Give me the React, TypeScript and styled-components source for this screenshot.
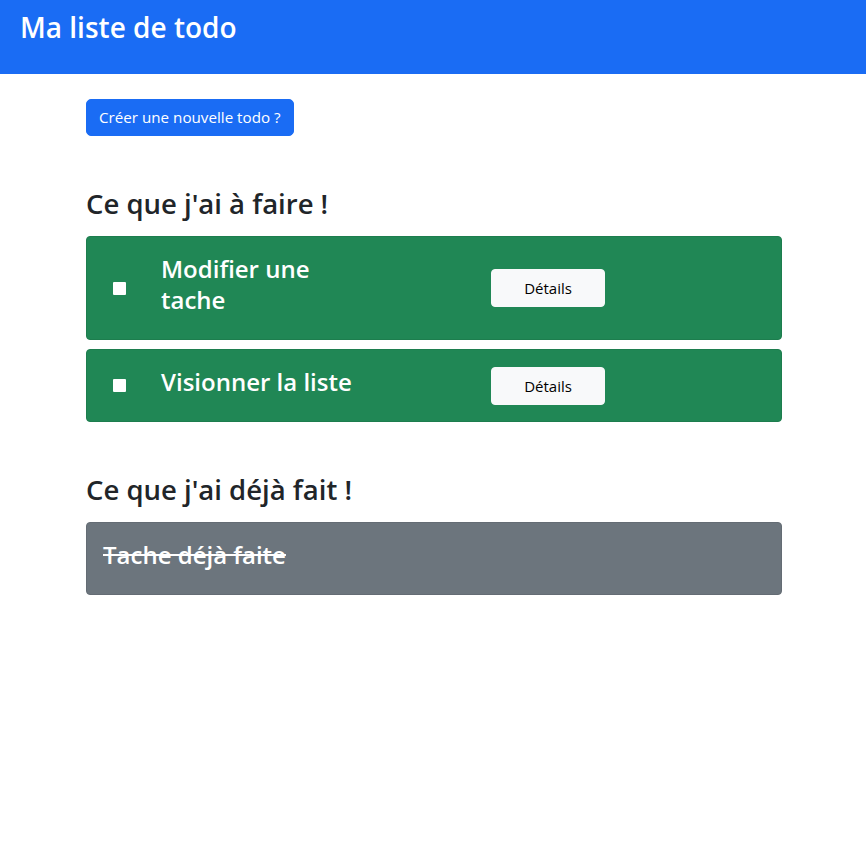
import React from "react";
import styled, { createGlobalStyle } from "styled-components";

const Global = createGlobalStyle`
  * { box-sizing: border-box; }
  body {
    margin: 0;
    font-family: "Open Sans", "Noto Sans", "Liberation Sans", sans-serif;
    color: #212529;
    background: #fff;
  }
`;

const Header = styled.header`
  background: #1a6cf4;
  height: 74px;
  padding: 8px 20px;
`;

const Brand = styled.h1`
  margin: 0;
  color: #fff;
  font-size: 28px;
  font-weight: 600;
  line-height: 38px;
`;

const Container = styled.main`
  max-width: 720px;
  margin: 0 auto;
  padding: 25px 11px 0 13px;
`;

const PrimaryButton = styled.button`
  font: inherit;
  font-size: 15.2px;
  line-height: 23px;
  padding: 6px 12px;
  color: #fff;
  background: #1a6cf4;
  border: 1px solid #1a6cf4;
  border-radius: 5px;
  cursor: pointer;
`;

const SectionTitle = styled.h2`
  margin: 50px 0 15px;
  font-size: 27.5px;
  font-weight: 600;
  line-height: 35px;
  color: #212529;
`;

const List = styled.div`
  display: flex;
  flex-direction: column;
  gap: 9px;
`;

const Card = styled.div<{ $tone: "success" | "secondary" }>`
  background: ${(p) => (p.$tone === "success" ? "#208755" : "#6c757d")};
  border: 1px solid ${(p) => (p.$tone === "success" ? "#1d7d4e" : "#646c74")};
  border-radius: 4px;
  padding: 16px;
  color: #fff;
`;

const Row = styled.div`
  display: grid;
  grid-template-columns: 33px 205px 1fr;
  column-gap: 25px;
  align-items: center;
`;

const CheckCell = styled.div`
  display: flex;
  justify-content: center;
  align-items: center;
`;

const Check = styled.input`
  appearance: none;
  width: 13px;
  height: 13px;
  margin: 0;
  background: #fff;
  border-radius: 1px;
  border: none;
`;

const TaskTitle = styled.h3<{ $done?: boolean }>`
  margin: 0 0 8px;
  font-size: 24px;
  font-weight: 600;
  line-height: 31px;
  color: #fff;
  text-decoration: ${(p) => (p.$done ? "line-through" : "none")};
`;

const ButtonCell = styled.div`
  padding-left: 100px;
`;

const LightButton = styled.button`
  font: inherit;
  font-size: 15px;
  line-height: 24px;
  width: 114px;
  padding: 6px 12px;
  color: #000;
  background: #f8f9fa;
  border: 1px solid #f8f9fa;
  border-radius: 4px;
  cursor: pointer;
`;

const todos = ["Modifier une tache", "Visionner la liste"];

export default function App() {
  return (
    <>
      <Global />
      <Header>
        <Brand>Ma liste de todo</Brand>
      </Header>
      <Container>
        <PrimaryButton>Créer une nouvelle todo ?</PrimaryButton>

        <SectionTitle>Ce que j'ai à faire !</SectionTitle>
        <List>
          {todos.map((t) => (
            <Card key={t} $tone="success">
              <Row>
                <CheckCell>
                  <Check type="checkbox" />
                </CheckCell>
                <TaskTitle>{t}</TaskTitle>
                <ButtonCell>
                  <LightButton>Détails</LightButton>
                </ButtonCell>
              </Row>
            </Card>
          ))}
        </List>

        <SectionTitle>Ce que j'ai déjà fait !</SectionTitle>
        <List>
          <Card $tone="secondary">
            <TaskTitle $done>Tache déjà faite</TaskTitle>
          </Card>
        </List>
      </Container>
    </>
  );
}
